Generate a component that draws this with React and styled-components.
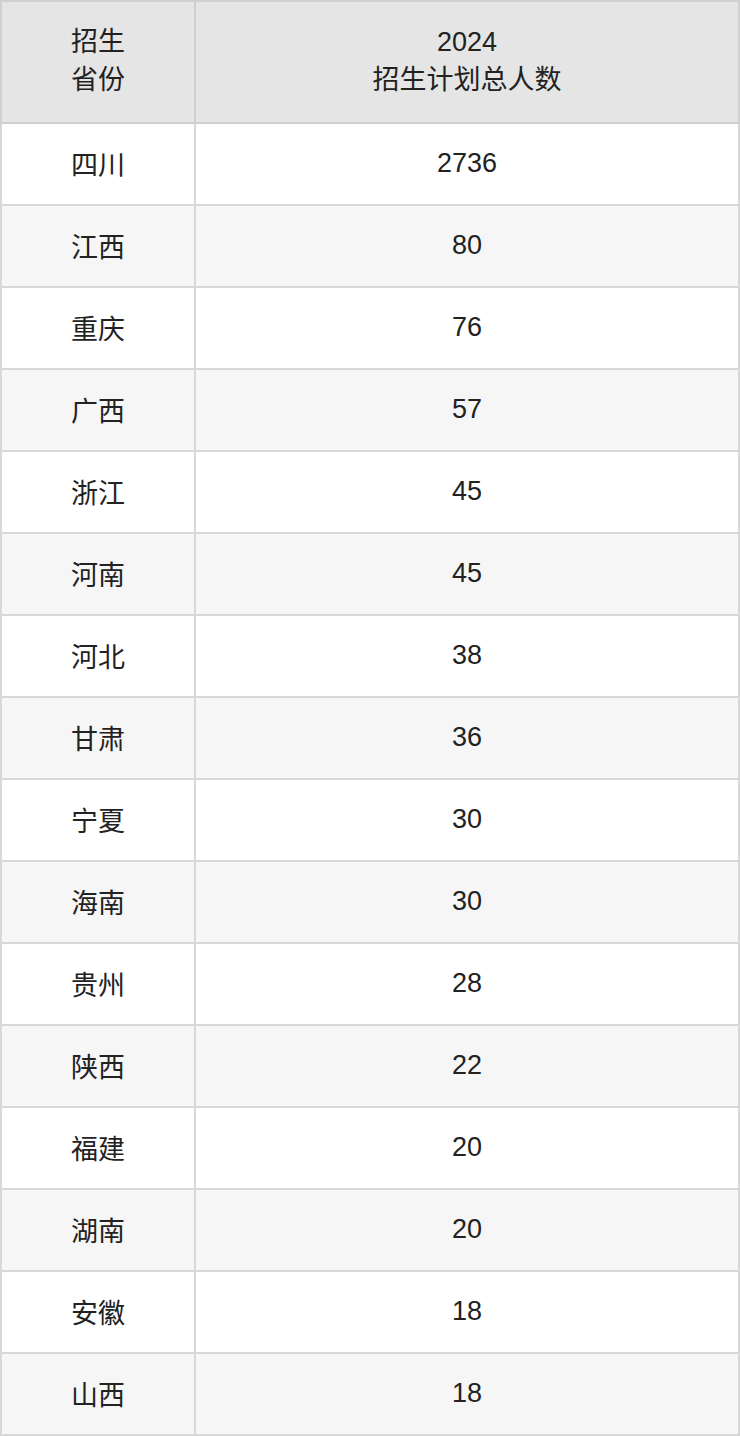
import React from "react";
import styled, { createGlobalStyle } from "styled-components";

const GlobalStyle = createGlobalStyle`
  html, body {
    margin: 0;
    padding: 0;
    background: #ffffff;
  }
  body {
    font-family: "Liberation Sans", Arial, "Noto Sans CJK SC", sans-serif;
    color: #222222;
  }
`;

const Table = styled.table`
  width: 740px;
  border-collapse: collapse;
  border: 2px solid #d8d8d8;
  table-layout: fixed;
  font-size: 27px;
`;

const HeadCell = styled.th`
  height: 118px;
  padding: 0 8px 2px;
  background: #e5e5e5;
  border: 2px solid #d0d0d0;
  font-weight: normal;
  line-height: 38px;
  text-align: center;
  vertical-align: middle;
  width: ${(p) => (p.$narrow ? "176px" : "auto")};
`;

const Row = styled.tr`
  background: ${(p) => (p.$striped ? "#f6f6f6" : "#ffffff")};
`;

const Cell = styled.td`
  height: 78px;
  padding: 0 8px 2px;
  border: 2px solid #d8d8d8;
  text-align: center;
  vertical-align: middle;
`;

const rows = [
  ["四川", 2736],
  ["江西", 80],
  ["重庆", 76],
  ["广西", 57],
  ["浙江", 45],
  ["河南", 45],
  ["河北", 38],
  ["甘肃", 36],
  ["宁夏", 30],
  ["海南", 30],
  ["贵州", 28],
  ["陕西", 22],
  ["福建", 20],
  ["湖南", 20],
  ["安徽", 18],
  ["山西", 18],
];

export default function App() {
  return (
    <>
      <GlobalStyle />
      <Table>
        <thead>
          <tr>
            <HeadCell $narrow>
              招生
              <br />
              省份
            </HeadCell>
            <HeadCell>
              2024
              <br />
              招生计划总人数
            </HeadCell>
          </tr>
        </thead>
        <tbody>
          {rows.map(([province, count], i) => (
            <Row key={province + i} $striped={i % 2 === 1}>
              <Cell>{province}</Cell>
              <Cell>{count}</Cell>
            </Row>
          ))}
        </tbody>
      </Table>
    </>
  );
}
